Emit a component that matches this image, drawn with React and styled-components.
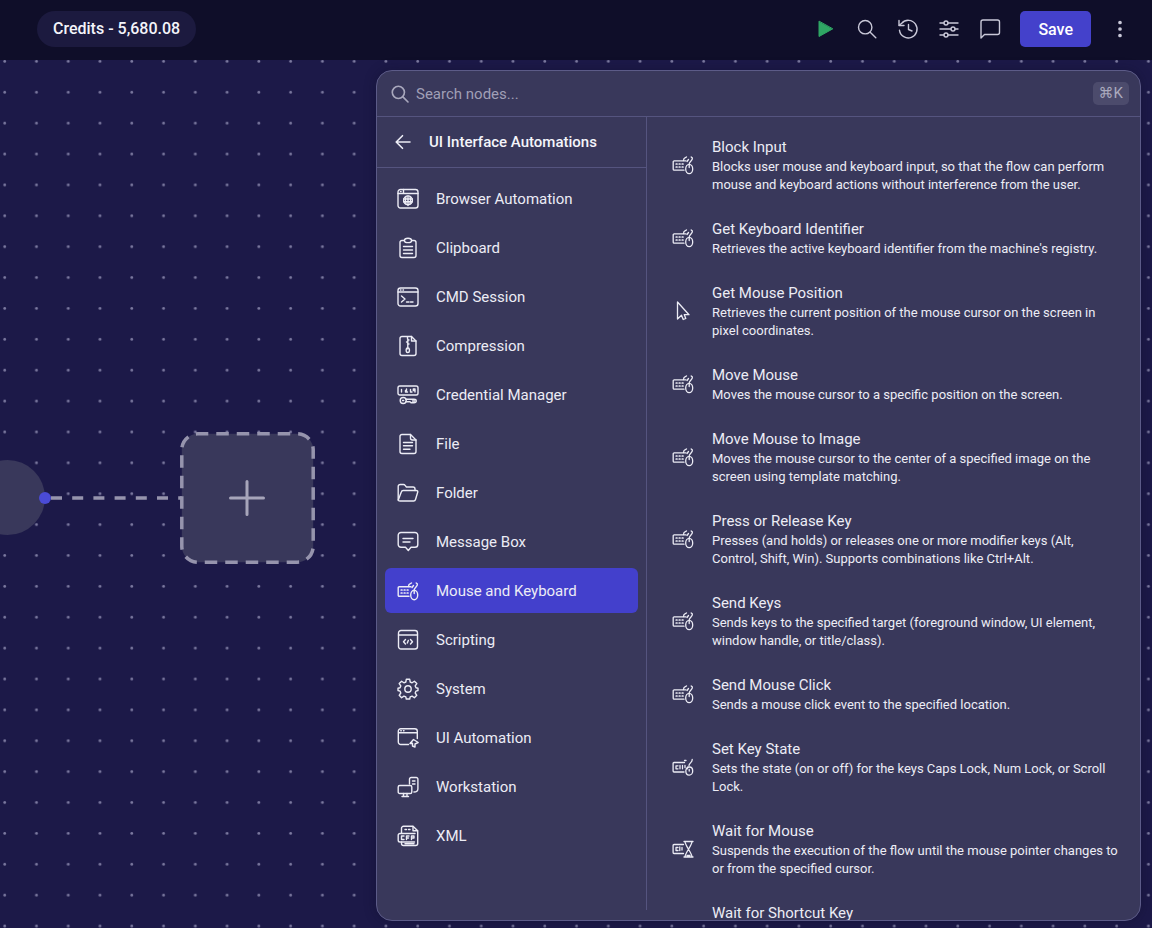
import * as React from "react";
import styled, {createGlobalStyle} from "styled-components";
import {useState} from "react";

const GlobalStyle = createGlobalStyle`
  * {
    box-sizing: border-box;
  }
  body {
    margin: 0;
    background: #1c1948;
    color: #ececf5;
    font-family: Roboto, "Liberation Sans", sans-serif;
    font-size: 15px;
  }
  button, input {
    font: inherit;
    color: inherit;
  }
`

const iconPaths = {
    browser: <>
        <rect x="1" y="1.5" width="20" height="18.5" rx="2.5"/>
        <path d="M1 5.5h20M3.5 3.6h.6M6.5 1.5v4"/>
        <circle cx="11" cy="12.3" r="4.4"/>
        <path d="M6.6 11h8.8M6.6 13.7h8.8M11 8v9.500M9 8.6c-.9 2.5-.9 5 0 7.4M13 8.6c.9 2.5.9 5 0 7.4"/>
    </>,
    clipboard: <>
        <path d="M7 3.5H5A2 2 0 0 0 3 5.500v13a2 2 0 0 0 2 2h12a2 2 0 0 0 2-2v-13a2 2 0 0 0-2-2h-2"/>
        <path d="M11 1.200c2 0 3.600 1 3.600 2.200S13 5.600 11 5.600 7.400 4.600 7.400 3.400 9 1.200 11 1.200z"/>
        <path d="M6.500 9.500h9M6.500 13h9M6.500 16.500h9"/>
    </>,
    cmd: <>
        <rect x="1" y="2" width="20" height="18" rx="2.500"/>
        <path d="M1 6h20M3.500 4h.5M6 4h.5M4.500 10l3.500 3-3.500 3M9.500 16h2.500M13.500 16h2.500"/>
    </>,
    compression: <>
        <path d="M14.500 1.500H5a2 2 0 0 0-2 2v15a2 2 0 0 0 2 2h12a2 2 0 0 0 2-2V6z"/>
        <path d="M14.500 1.500V6H19M10.500 2v1.500M12 5h-1.500M9.500 7h1.500M12 9h-1.500M10.800 4v10"/>
        <rect x="9.200" y="13" width="3.200" height="4.500" rx="1.500"/>
    </>,
    credential: <>
        <rect x="1" y="2" width="20" height="9" rx="1.800"/>
        <path d="M4.500 5.500v2.500M9.500 5v1.500H8.500v1.500h2M13.500 5.500v2.500h1.500M18 8V5h-1.700v1.500H18"/>
        <circle cx="6.200" cy="16.500" r="3"/>
        <path d="M9 15.200h8c3 0 3 3.500 0 3.500h-3l-1-1h-4M5.500 16.500h1.200M15.500 17h2"/>
    </>,
    file: <>
        <path d="M13.500 1.500H5a2 2 0 0 0-2 2v15a2 2 0 0 0 2 2h12a2 2 0 0 0 2-2V7z"/>
        <path d="M13.500 1.500V5a2 2 0 0 0 2 2H19M6.500 9.500h9M6.500 12.800h9M6.500 16.200h6.500"/>
    </>,
    folder: <>
        <path d="M1.200 18V4.500a2 2 0 0 1 2-2h3.300a2 2 0 0 1 1.600.8l1.300 1.700H16a2 2 0 0 1 2 2v1.500"/>
        <path d="M1.300 18l3-8a2 2 0 0 1 2-1.500h13c1.200 0 1.700.8 1.400 1.800l-2.200 7.200a2 2 0 0 1-2 1.500H3c-1.200 0-1.900-.5-1.700-1z"/>
    </>,
    message: <>
        <path d="M4 1.500h14a2.800 2.800 0 0 1 2.800 2.800v9.200a2.800 2.800 0 0 1-2.800 2.800h-4L11.300 19.500 8.500 16.300H4a2.800 2.800 0 0 1-2.800-2.800V4.300A2.800 2.800 0 0 1 4 1.500z"/>
        <path d="M6 7.500h10M6 11h7"/>
    </>,
    mouseKeyboard: <>
        <path d="M12 16.200H2.200a1 1 0 0 1-1-1V7.800a1 1 0 0 1 1-1H14"/>
        <path d="M4.200 10h.8M7.200 10h.8M10.200 10h.8M4.200 13h.8M7.200 13h.8M10.200 13h.8" strokeWidth="1.700"/>
        <ellipse cx="17.200" cy="15" rx="3.500" ry="4.700"/>
        <path d="M17.200 11v2.500M17.200 10c0-2.500 3.500-3.200 3.200-6l-1.200-1M11.500 6.500c0-3 1.700-2.500 3-3.500M15 7.500l1.500-2"/>
    </>,
    keyState: <>
        <path d="M12 16H2a.9.900 0 0 1-.9-.9V7.400a.9.900 0 0 1 .9-.9h10.500M13 9.500v2"/>
        <path d="M6 9.800H4v3h2M8 9.500v3.300M10.500 9.500v3.300"/>
        <path d="M16 10.700c-1.400.8-2.200 2.300-2.200 4.100 0 2.500 1.400 4.400 3.400 4.400s3.500-1.900 3.500-4.200-1.400-4-3.300-4c-1.200 0-2 .8-2.200 1.800M17.200 15v-1.500M17 9.500c0-2.500 3.500-3 3.200-6M12.500 4.500h1.500"/>
    </>,
    wait: <>
        <path d="M11.500 15.500H2a.9.900 0 0 1-.9-.9V7.400A.9.900 0 0 1 2 6.500h9.500"/>
        <path d="M6 9.500H4v3h2M7.800 9v3.500M10 9.500v2.500"/>
        <path d="M12 3.500h9M12 19h9M13 3.500c0 4 7 11.500 7 15.500M20 3.500c0 4-7 11.500-7 15.500M15 17.500h3"/>
    </>,
    pointer: <path d="M5.500 2v17l4-3.800 1.700 4.300 2.600-1-1.500-3.800h4.700z"/>,
    scripting: <>
        <rect x="1.500" y="1.500" width="19" height="18.500" rx="2.500"/>
        <path d="M1.500 6h19M8.500 10.500L6.500 12.700l2 2.300M13.500 10.500l2 2.200-2 2.300M11.300 11.500l-1 2.500"/>
    </>,
    system: <>
        <circle cx="11" cy="11" r="3.200"/>
        <path d="M9.300 1.300h3.400l.5 2.700 1.900.8 2.300-1.600 2.400 2.400-1.600 2.300.8 1.900 2 .4v2.300l-2 .6-.8 1.900 1.600 2.300-2.400 2.400-2.300-1.600-1.900.8-.5 2.100H9.300l-.5-2.100-1.900-.8-2.300 1.600-2.400-2.400L3.800 15 3 13.100l-2-.6v-2.300l2-.4.800-1.900-1.600-2.300 2.400-2.400 2.300 1.600 1.900-.8z"/>
    </>,
    uiAutomation: <>
        <path d="M11.500 17.500H3.800a2.500 2.500 0 0 1-2.500-2.500V4.200a2.500 2.500 0 0 1 2.500-2.500h14a2.500 2.500 0 0 1 2.500 2.500v7.300M1.300 5.700h19M3.800 3.800h.5M6.500 3.800h.5"/>
        <path d="M16.500 12.500l-3.500 4 2.500-.3v2.800l2.500 1v-3l3.200-1.500z"/>
    </>,
    workstation: <>
        <path d="M12.500 8V3.200a1.700 1.700 0 0 1 1.700-1.700h5a1.700 1.700 0 0 1 1.700 1.700V13c0 2-1.500 3-4 3M15.500 5h2.500M15.500 8h2.500"/>
        <rect x="1.200" y="9.500" width="13.600" height="8" rx="1.600"/>
        <path d="M6.500 17.500v2.800M10 17.500v2.800M5 20.500h6.500"/>
    </>,
    xml: <>
        <path d="M4.500 8V3.300a2 2 0 0 1 2-2H16l4.700 4.500v12.700a2 2 0 0 1-2 2H6.500a2 2 0 0 1-2-2V17"/>
        <path d="M16 1.500v4.300h4.500M8 4.500h1.500M11.500 4.500h1.500M18 8.500H3a1.800 1.800 0 0 0-1.800 1.800v4.900A1.800 1.800 0 0 0 3 17h14.500M7 11H4.500v3.500H7M9.500 14.500V11h2.500M9.500 13h2M14.500 14.500V11h2.500v2h-2.500M8 18.800h9"/>
    </>,
    arrowLeft: <path d="M18 11H4.500M10.500 4.700L4.200 11l6.300 6.300"/>,
    search: <>
        <circle cx="9.200" cy="9.200" r="6.700"/>
        <path d="M14.200 14.200l5.600 5.600"/>
    </>,
    history: <>
        <path d="M2.500 12.300A8.800 8.800 0 1 0 4.700 5.200L2.300 7.200"/>
        <path d="M2 2.500v5h5M11.500 6.500v5l3.500 1.500"/>
    </>,
    sliders: <>
        <path d="M2 5h4M10 5h10M2 11h11M17 11h3M2 17h4M10 17h10"/>
        <circle cx="8" cy="5" r="2"/>
        <circle cx="15" cy="11" r="2"/>
        <circle cx="8" cy="17" r="2"/>
    </>,
    comment: <path d="M2 20V4a2 2 0 0 1 2-2h14.500a2 2 0 0 1 2 2v10.500a2 2 0 0 1-2 2h-13z"/>,
    play: <path d="M4 3.500v15l13.500-7.500z" fill="#2fa664" stroke="#2fa664" strokeWidth="1"/>,
    more: <path d="M11 4.500v.01M11 11v.01M11 17.500v.01" strokeWidth="3.700"/>,
}

const Icon = ({name, size = 22, weight = 1.4}) => (
    <IconSvg width={size} height={size} viewBox="0 0 22 22" strokeWidth={weight} aria-hidden="true">
        {iconPaths[name]}
    </IconSvg>
)

const categories = [
    {title: 'Browser Automation', icon: 'browser'},
    {title: 'Clipboard', icon: 'clipboard'},
    {title: 'CMD Session', icon: 'cmd'},
    {title: 'Compression', icon: 'compression'},
    {title: 'Credential Manager', icon: 'credential'},
    {title: 'File', icon: 'file'},
    {title: 'Folder', icon: 'folder'},
    {title: 'Message Box', icon: 'message'},
    {title: 'Mouse and Keyboard', icon: 'mouseKeyboard'},
    {title: 'Scripting', icon: 'scripting'},
    {title: 'System', icon: 'system'},
    {title: 'UI Automation', icon: 'uiAutomation'},
    {title: 'Workstation', icon: 'workstation'},
    {title: 'XML', icon: 'xml'},
]

const nodes = [
    {title: 'Block Input', icon: 'mouseKeyboard', text: 'Blocks user mouse and keyboard input, so that the flow can perform mouse and keyboard actions without interference from the user.'},
    {title: 'Get Keyboard Identifier', icon: 'mouseKeyboard', text: 'Retrieves the active keyboard identifier from the machine\'s registry.'},
    {title: 'Get Mouse Position', icon: 'pointer', text: 'Retrieves the current position of the mouse cursor on the screen in pixel coordinates.'},
    {title: 'Move Mouse', icon: 'mouseKeyboard', text: 'Moves the mouse cursor to a specific position on the screen.'},
    {title: 'Move Mouse to Image', icon: 'mouseKeyboard', text: 'Moves the mouse cursor to the center of a specified image on the screen using template matching.'},
    {title: 'Press or Release Key', icon: 'mouseKeyboard', text: 'Presses (and holds) or releases one or more modifier keys (Alt, Control, Shift, Win). Supports combinations like Ctrl+Alt.'},
    {title: 'Send Keys', icon: 'mouseKeyboard', text: 'Sends keys to the specified target (foreground window, UI element, window handle, or title/class).'},
    {title: 'Send Mouse Click', icon: 'mouseKeyboard', text: 'Sends a mouse click event to the specified location.'},
    {title: 'Set Key State', icon: 'keyState', text: 'Sets the state (on or off) for the keys Caps Lock, Num Lock, or Scroll Lock.'},
    {title: 'Wait for Mouse', icon: 'wait', text: 'Suspends the execution of the flow until the mouse pointer changes to or from the specified cursor.'},
    {title: 'Wait for Shortcut Key'},
]

export default function App() {

    const [active, setActive] = useState('Mouse and Keyboard')
    const [query, setQuery] = useState('')

    return (
        <Page>
            <GlobalStyle/>
            <Header>
                <Credits>Credits - 5,680.08</Credits>
                <Toolbar>
                    <IconButton aria-label="Run"><Icon name="play"/></IconButton>
                    <IconButton aria-label="Search"><Icon name="search"/></IconButton>
                    <IconButton aria-label="History"><Icon name="history"/></IconButton>
                    <IconButton aria-label="Settings"><Icon name="sliders"/></IconButton>
                    <IconButton aria-label="Comments"><Icon name="comment"/></IconButton>
                </Toolbar>
                <SaveButton>Save</SaveButton>
                <IconButton aria-label="More"><Icon name="more"/></IconButton>
            </Header>
            <Workspace>
                <Dots aria-hidden="true">
                    <defs>
                        <pattern id="dots" width="31.770" height="30.880" patternUnits="userSpaceOnUse">
                            <circle cx="4.700" cy="1.400" r="1.400" fill="#7c7aa0"/>
                        </pattern>
                    </defs>
                    <rect width="100%" height="100%" fill="url(#dots)"/>
                </Dots>
                <StartNode/>
                <Edge viewBox="0 0 137 4" aria-hidden="true">
                    <path d="M0 2h137" stroke="#9694ad" strokeWidth="3.500" strokeDasharray="11 10.200" strokeDashoffset="-6"/>
                </Edge>
                <Port/>
                <AddNode aria-label="Add node">
                    <svg width="135" height="132" viewBox="0 0 135 132" fill="none" aria-hidden="true">
                        <rect x="1.800" y="1.800" width="131.400" height="128.400" rx="16" fill="#39385b" stroke="#9694ad" strokeWidth="3.500" strokeDasharray="12.500 7.980" strokeDashoffset="2"/>
                        <path d="M67 49.500v33M50.500 66h33" stroke="#a7a5ba" strokeWidth="3" strokeLinecap="round"/>
                    </svg>
                </AddNode>
                <Panel>
                    <SearchRow>
                        <Icon name="search" size={20} weight={1.8}/>
                        <SearchInput
                            aria-label="Search nodes"
                            placeholder="Search nodes..."
                            value={query}
                            onChange={(e) => setQuery(e.target.value)}
                        />
                        <Shortcut>⌘K</Shortcut>
                    </SearchRow>
                    <PanelBody>
                        <Sidebar>
                            <SidebarHeader>
                                <BackButton aria-label="Back"><Icon name="arrowLeft" weight={1.6}/></BackButton>
                                <SidebarTitle>UI Interface Automations</SidebarTitle>
                            </SidebarHeader>
                            <CategoryList>
                                {categories.map(({title, icon}) =>
                                    <Category
                                        key={title}
                                        $active={title === active}
                                        onClick={() => setActive(title)}
                                    >
                                        <Icon name={icon}/>
                                        {title}
                                    </Category>
                                )}
                            </CategoryList>
                        </Sidebar>
                        <NodeList>
                            {nodes.map(({title, icon, text}) =>
                                <NodeItem key={title}>
                                    <NodeIcon>{icon && <Icon name={icon} weight={1.3}/>}</NodeIcon>
                                    <div>
                                        <NodeTitle>{title}</NodeTitle>
                                        {text && <NodeText>{text}</NodeText>}
                                    </div>
                                </NodeItem>
                            )}
                        </NodeList>
                    </PanelBody>
                </Panel>
            </Workspace>
        </Page>
    )
}

const Page = styled.div`
  display: flex;
  flex-direction: column;
  height: 100vh;
  overflow: hidden;
`

const IconSvg = styled.svg`
  display: block;
  flex-shrink: 0;
  fill: none;
  stroke: currentColor;
  stroke-linecap: round;
  stroke-linejoin: round;
`

const Header = styled.header`
  display: flex;
  align-items: center;
  flex-shrink: 0;
  height: 60px;
  padding: 0 18px 2px 37px;
  background: #0f0e29;
`

const Credits = styled.div`
  padding: 0 16px;
  border-radius: 18px;
  background: #1c1a3f;
  color: #f4f4fa;
  font-size: 16px;
  font-weight: 500;
  line-height: 36px;
`

const Toolbar = styled.div`
  display: flex;
  gap: 12px;
  margin-left: auto;
`

const IconButton = styled.button`
  display: flex;
  justify-content: center;
  align-items: center;
  width: 29px;
  height: 36px;
  padding: 0;
  border: 0;
  background: none;
  color: #c9c8d8;
`

const SaveButton = styled.button`
  height: 36px;
  margin: 0 14px 0 16px;
  padding: 0 18px;
  border: 0;
  border-radius: 5px;
  background: #4441cb;
  color: #fff;
  font-size: 16px;
  font-weight: 500;
`

const Workspace = styled.main`
  position: relative;
  display: flex;
  justify-content: flex-end;
  flex: 1;
  min-height: 0;
  padding: 10px 11px 7px;
`

const Dots = styled.svg`
  position: absolute;
  inset: 0;
  width: 100%;
  height: 100%;
`

const StartNode = styled.div`
  position: absolute;
  top: 400px;
  left: -30px;
  width: 75px;
  height: 75px;
  border-radius: 50%;
  background: #39385b;
`

const Port = styled.div`
  position: absolute;
  top: 432px;
  left: 39px;
  width: 12px;
  height: 12px;
  border-radius: 50%;
  background: #4a4bd6;
`

const Edge = styled.svg`
  position: absolute;
  top: 436px;
  left: 45px;
  width: 137px;
  height: 4px;
`

const AddNode = styled.button`
  position: absolute;
  top: 372px;
  left: 180px;
  display: flex;
  padding: 0;
  border: 0;
  background: none;
`

const Panel = styled.section`
  position: relative;
  display: flex;
  flex-direction: column;
  flex: 0 1 765px;
  border: 1px solid #5c5b88;
  border-radius: 16px;
  overflow: hidden;
  background: #39385b;
  box-shadow: 0 0 12px rgba(15, 14, 41, 0.4);
`

const SearchRow = styled.div`
  display: flex;
  align-items: center;
  flex-shrink: 0;
  gap: 6px;
  height: 46px;
  padding: 0 11px 0 13px;
  border-bottom: 1px solid #55547f;
  color: #a9a8bd;
`

const SearchInput = styled.input`
  flex: 1;
  min-width: 0;
  padding: 0;
  border: 0;
  outline: 0;
  background: none;
  &::placeholder {
    color: #a09fb6;
  }
`

const Shortcut = styled.kbd`
  padding: 0 6px;
  border-radius: 5px;
  background: #4c4b6c;
  color: #aaa9bd;
  font-family: Roboto, "DejaVu Sans", sans-serif;
  line-height: 23px;
`

const PanelBody = styled.div`
  display: flex;
  flex: 1;
  min-height: 0;
`

const Sidebar = styled.div`
  flex-shrink: 0;
  width: 270px;
  margin-bottom: 10px;
  border-right: 1px solid #55547f;
`

const SidebarHeader = styled.div`
  display: flex;
  align-items: center;
  gap: 15px;
  height: 51px;
  padding: 0 15px;
  border-bottom: 1px solid #55547f;
`

const BackButton = styled.button`
  padding: 0;
  border: 0;
  background: none;
`

const SidebarTitle = styled.h2`
  margin: 0;
  color: #f4f4fa;
  font-size: 15px;
  font-weight: 500;
`

const CategoryList = styled.nav`
  display: flex;
  flex-direction: column;
  gap: 4px;
  padding: 8px;
`

const Category = styled.button`
  display: flex;
  align-items: center;
  gap: 17px;
  height: 45px;
  padding: 0 12px;
  border: 0;
  border-radius: 6px;
  background: ${({$active}) => $active ? '#4340cc' : 'none'};
  text-align: left;
`

const NodeList = styled.ul`
  flex: 1;
  min-width: 0;
  margin: 0;
  padding: 19px 20px 0 25px;
  overflow: hidden;
  list-style: none;
`

const NodeItem = styled.li`
  display: flex;
  align-items: center;
  gap: 18px;
  margin-bottom: 24px;
`

const NodeIcon = styled.div`
  flex-shrink: 0;
  width: 22px;
`

const NodeTitle = styled.h3`
  margin: 0;
  font-size: 15px;
  font-weight: 400;
  line-height: 22px;
`

const NodeText = styled.p`
  margin: 0;
  font-size: 13px;
  line-height: 18px;
`
